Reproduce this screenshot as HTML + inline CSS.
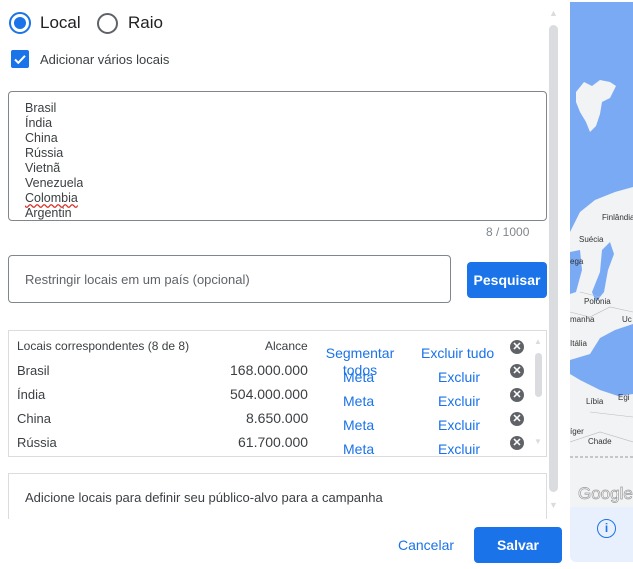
<!DOCTYPE html>
<html><head><meta charset="utf-8"><style>
*{box-sizing:border-box;margin:0;padding:0}
body{width:633px;height:569px;background:#fff;font-family:"Liberation Sans",Arial,sans-serif;position:relative;overflow:hidden;color:#3c4043}
.abs{position:absolute}
.t{font-size:12px;color:#3c4043}
.link{color:#1a73e8;font-size:14px}
.x{width:14px;height:14px;border-radius:50%;background:#5f6368;color:#fff;font-size:11px;font-weight:bold;text-align:center;line-height:14px}
</style></head><body>
<div class="abs" style="left:9px;top:12px;width:22px;height:22px;border:2px solid #1a73e8;border-radius:50%"><div style="margin:3px;width:12px;height:12px;border-radius:50%;background:#1a73e8"></div></div>
<div class="abs" style="left:40px;top:13px;font-size:17px;color:#202124">Local</div>
<div class="abs" style="left:97px;top:13px;width:21px;height:21px;border:2px solid #5f6368;border-radius:50%"></div>
<div class="abs" style="left:128px;top:13px;font-size:17px;color:#202124">Raio</div>
<div class="abs" style="left:11px;top:50px;width:18px;height:18px;background:#1a73e8;border-radius:2px">
<svg width="18" height="18"><path d="M4 9.5l3.3 3.3L14 5.8" stroke="#fff" stroke-width="2" fill="none"/></svg></div>
<div class="abs" style="left:40px;top:52px;font-size:13px;color:#3c4043">Adicionar vários locais</div>
<div class="abs" style="left:8px;top:91px;width:539px;height:130px;border:1px solid #80868b;border-radius:4px;overflow:hidden">
<div style="position:absolute;left:16px;top:9px;font-size:12.5px;line-height:15px;color:#3c4043;height:119px;overflow:hidden">Brasil<br>Índia<br>China<br>Rússia<br>Vietnã<br>Venezuela<br><span style="text-decoration:underline wavy #d93025">Colombia</span><br><span>Argentin</span></div></div>
<div class="abs" style="left:486px;top:225px;font-size:12px;color:#80868b">8 / 1000</div>
<div class="abs" style="left:8px;top:255px;width:443px;height:48px;border:1px solid #80868b;border-radius:4px"></div>
<div class="abs" style="left:25px;top:272px;font-size:13px;color:#5f6368">Restringir locais em um país (opcional)</div>
<div class="abs" style="left:467px;top:262px;width:80px;height:36px;background:#1a73e8;border-radius:4px;color:#fff;font-weight:bold;font-size:14px;text-align:center;line-height:36px">Pesquisar</div>
<div class="abs" style="left:8px;top:330px;width:539px;height:127px;border:1px solid #dadce0"></div>
<div class="abs t" style="left:17px;top:339px">Locais correspondentes (8 de 8)</div>
<div class="abs t" style="left:265px;top:339px">Alcance</div>
<div class="abs link" style="left:323px;top:345px;line-height:17px;text-align:center;width:74px">Segmentar todos</div>
<div class="abs link" style="left:421px;top:345px">Excluir tudo</div>
<div class="abs x" style="left:510px;top:340px">✕</div>
<div class="abs t" style="left:17px;top:363px;font-size:13px">Brasil</div><div class="abs t" style="left:230px;top:362px;font-size:14px">168.000.000</div>
<div class="abs link" style="left:343px;top:369px">Meta</div><div class="abs link" style="left:438px;top:369px">Excluir</div><div class="abs x" style="left:510px;top:364px">✕</div>
<div class="abs t" style="left:17px;top:387px;font-size:13px">Índia</div><div class="abs t" style="left:230px;top:386px;font-size:14px">504.000.000</div>
<div class="abs link" style="left:343px;top:393px">Meta</div><div class="abs link" style="left:438px;top:393px">Excluir</div><div class="abs x" style="left:510px;top:388px">✕</div>
<div class="abs t" style="left:17px;top:411px;font-size:13px">China</div><div class="abs t" style="left:246px;top:410px;font-size:14px">8.650.000</div>
<div class="abs link" style="left:343px;top:417px">Meta</div><div class="abs link" style="left:438px;top:417px">Excluir</div><div class="abs x" style="left:510px;top:412px">✕</div>
<div class="abs t" style="left:17px;top:435px;font-size:13px">Rússia</div><div class="abs t" style="left:238px;top:434px;font-size:14px">61.700.000</div>
<div class="abs link" style="left:343px;top:441px">Meta</div><div class="abs link" style="left:438px;top:441px">Excluir</div><div class="abs x" style="left:510px;top:436px">✕</div>
<div class="abs" style="left:535px;top:353px;width:7px;height:44px;background:#dadce0;border-radius:4px"></div>
<div class="abs" style="left:534px;top:337px;font-size:8px;color:#dadce0">▲</div>
<div class="abs" style="left:534px;top:437px;font-size:8px;color:#dadce0">▼</div>
<div class="abs" style="left:8px;top:473px;width:539px;height:60px;border:1px solid #dadce0;border-bottom:none"></div>
<div class="abs" style="left:25px;top:490px;font-size:13px;color:#3c4043">Adicione locais para definir seu público-alvo para a campanha</div>
<div class="abs" style="left:0;top:519px;width:548px;height:50px;background:#fff"></div>
<div class="abs" style="left:549px;top:25px;width:9px;height:467px;background:#dadce0;border-radius:5px"></div>
<div class="abs" style="left:549px;top:8px;font-size:9px;color:#dadce0">▲</div>
<div class="abs" style="left:549px;top:500px;font-size:9px;color:#dadce0">▼</div>
<div class="abs link" style="left:398px;top:537px;font-size:14px">Cancelar</div>
<div class="abs" style="left:474px;top:527px;width:88px;height:36px;background:#1a73e8;border-radius:4px;color:#fff;font-weight:bold;font-size:14px;text-align:center;line-height:36px">Salvar</div>
<div class="abs" style="left:570px;top:2px;width:63px;height:505px;background:#7baaf5;overflow:hidden">
<svg width="63" height="505" style="position:absolute;left:0;top:0">
<path d="M6 90 L14 80 L22 84 L30 78 L40 80 L46 84 L40 96 L32 100 L30 112 L26 124 L20 130 L16 120 L10 110 L6 100 Z" fill="#f1f3f4"/>
<path d="M0 230 L10 210 L25 198 L45 190 L63 185 L63 505 L0 505 Z" fill="#f1f3f4"/>
<path d="M0 250 L10 248 L12 268 L6 290 L0 292 Z" fill="#7baaf5"/>
<path d="M32 248 L40 240 L44 252 L38 268 L34 290 L26 300 L22 290 L30 270 Z" fill="#7baaf5"/>
<path d="M30 336 L45 328 L63 322 L63 392 L48 394 L30 388 L10 378 L0 372 L0 358 L20 352 Z" fill="#7baaf5"/>
<path d="M0 455 L63 455" stroke="#999" stroke-dasharray="3 2"/>
<path d="M0 310 L20 315 L40 305 L63 310 M10 290 L30 295 M20 410 L63 415 M0 440 L30 430 L63 440" stroke="#bbb" fill="none" stroke-width="0.6"/>
<text x="32" y="218" font-size="8" font-family="Liberation Sans" fill="#333">Finlândia</text>
<text x="9" y="240" font-size="8" font-family="Liberation Sans" fill="#333">Suécia</text>
<text x="0" y="262" font-size="8" font-family="Liberation Sans" fill="#333">ega</text>
<text x="14" y="302" font-size="8" font-family="Liberation Sans" fill="#333">Polônia</text>
<text x="0" y="320" font-size="8" font-family="Liberation Sans" fill="#333">manha</text>
<text x="52" y="320" font-size="8" font-family="Liberation Sans" fill="#333">Uc</text>
<text x="0" y="344" font-size="8" font-family="Liberation Sans" fill="#333">Itália</text>
<text x="16" y="402" font-size="8" font-family="Liberation Sans" fill="#333">Líbia</text>
<text x="48" y="398" font-size="8" font-family="Liberation Sans" fill="#333">Egi</text>
<text x="0" y="432" font-size="8" font-family="Liberation Sans" fill="#333">íger</text>
<text x="18" y="442" font-size="8" font-family="Liberation Sans" fill="#333">Chade</text>
<text x="8" y="497" font-size="17" font-family="Liberation Sans" fill="#fff" stroke="#999" stroke-width="0.7">Google</text>
</svg></div>
<div class="abs" style="left:570px;top:507px;width:63px;height:55px;background:#e8f0fe;border-radius:0 0 0 6px"></div>
<div class="abs" style="left:597px;top:519px;width:19px;height:19px;border:1.5px solid #1a73e8;border-radius:50%;color:#1a73e8;font-size:12px;font-weight:bold;text-align:center;line-height:16px">i</div>
</body></html>
